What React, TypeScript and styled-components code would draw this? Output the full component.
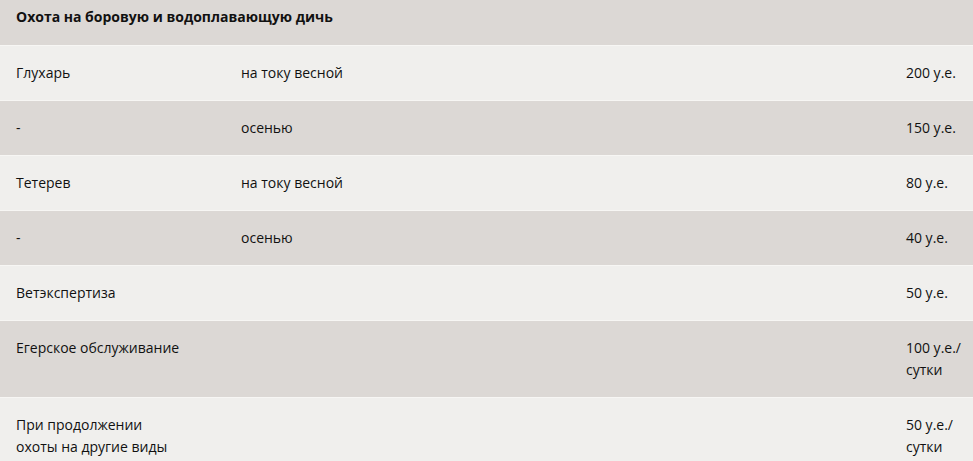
import React from "react";
import styled, { createGlobalStyle } from "styled-components";

const GlobalStyle = createGlobalStyle`
  html, body {
    margin: 0;
    padding: 0;
    overflow: hidden;
    background: #f0efed;
  }
  body {
    font-family: "Open Sans", "Liberation Sans", sans-serif;
    color: #111;
  }
`;

type Item = {
  name: React.ReactNode;
  season?: string;
  price: React.ReactNode;
};

const items: Item[] = [
  { name: "Глухарь", season: "на току весной", price: "200 у.е." },
  { name: "-", season: "осенью", price: "150 у.е." },
  { name: "Тетерев", season: "на току весной", price: "80 у.е." },
  { name: "-", season: "осенью", price: "40 у.е." },
  { name: "Ветэкспертиза", price: "50 у.е." },
  { name: "Егерское обслуживание", price: "100 у.е./ сутки" },
  {
    name: (
      <>
        При продолжении
        <br />
        охоты на другие виды
      </>
    ),
    price: "50 у.е./ сутки",
  },
];

const PriceTable = () => {
  return (
    <Table>
      <colgroup>
        <col style={{ width: 225 }} />
        <col />
        <col style={{ width: 83 }} />
      </colgroup>
      <tbody>
        <Row $dark>
          <HeadCell colSpan={3}>Охота на боровую и водоплавающую дичь</HeadCell>
        </Row>
        {items.map((item, i) => (
          <Row key={i} $dark={i % 2 === 1}>
            <Cell>{item.name}</Cell>
            <Cell>{item.season}</Cell>
            <PriceCell>{item.price}</PriceCell>
          </Row>
        ))}
      </tbody>
    </Table>
  );
};

const App = () => (
  <>
    <GlobalStyle />
    <PriceTable />
  </>
);

const Table = styled.table`
  width: 100%;
  table-layout: fixed;
  border-collapse: collapse;
  font-size: 14px;
  line-height: 22px;
`;

const Row = styled.tr<{ $dark?: boolean }>`
  background: ${(p) => (p.$dark ? "#dcd8d5" : "#f0efed")};
  border-bottom: 1px solid #f7f6f4;
`;

const Cell = styled.td`
  padding: 16px 16px;
  vertical-align: top;
  text-align: left;
`;

const HeadCell = styled(Cell)`
  padding-top: 6px;
  padding-bottom: 17px;
  font-weight: 700;
`;

const PriceCell = styled(Cell)`
  padding-right: 0;
`;

export default App;
